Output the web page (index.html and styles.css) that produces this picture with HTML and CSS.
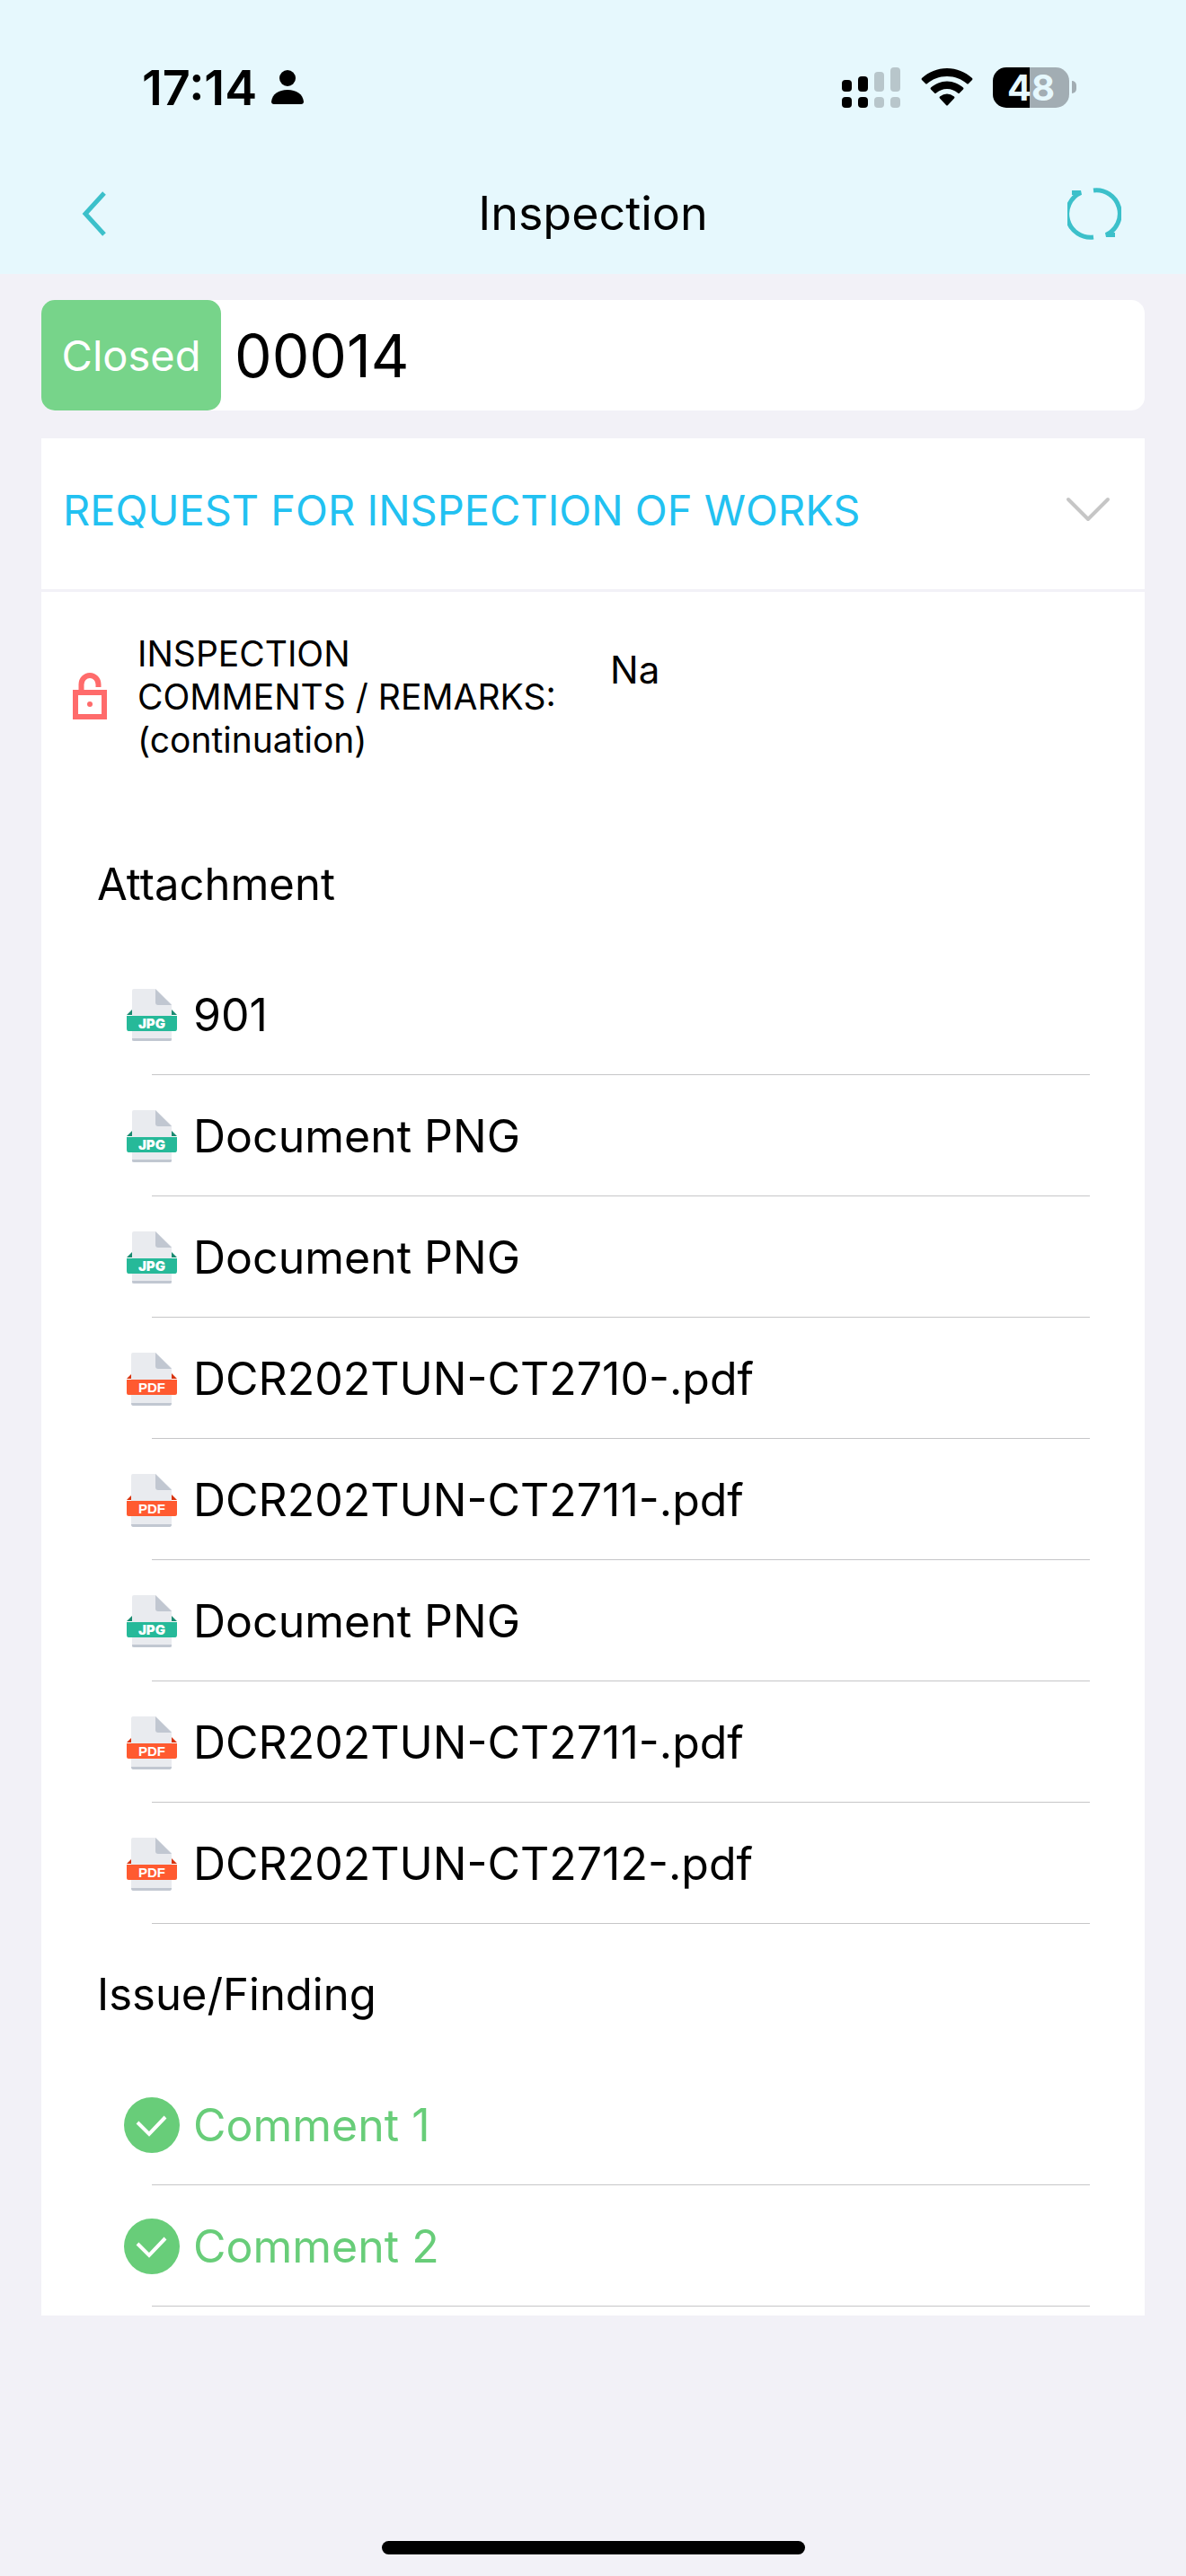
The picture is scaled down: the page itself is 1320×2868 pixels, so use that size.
FILE: index.html
```html
<!DOCTYPE html>
<html lang="en">
<head>
  <meta charset="UTF-8">
  <meta name="viewport" content="width=device-width, initial-scale=1">
  <title>Inspection</title>
  <link rel="stylesheet" href="styles.css">
</head>
<body>

  <!-- shared icons -->
  <svg class="sprite" aria-hidden="true">
    <symbol id="icon-jpg" viewBox="0 0 62 62">
      <path fill="#1a8a70" d="M3 31l6-6h44l6 6z"/>
      <path fill="#e9ebef" d="M11 2h24l18 17v41H9V4q0-2 2-2z"/>
      <path fill="#c1c7d1" d="M35 2l18 18H38q-3 0-3-3z"/>
      <path fill="#c1c7d1" d="M9 57h44v1q0 2-2 2H11q-2 0-2-2z"/>
      <path fill="#26b999" d="M3 32h56v14q0 3-2 3H5q-2 0-2-3z"/>
      <text class="file-type file-type-bold" x="31" y="46" text-anchor="middle">JPG</text>
    </symbol>
    <symbol id="icon-pdf" viewBox="0 0 62 62">
      <path fill="#d8320c" d="M3 31l6-6h44l6 6z"/>
      <path fill="#e9ebef" d="M10 2h25l18 17v41H8V4q0-2 2-2z"/>
      <path fill="#c1c7d1" d="M35 2l18 18H38q-3 0-3-3z"/>
      <path fill="#c1c7d1" d="M8 58h45q0 3-2 3H10q-2 0-2-3z"/>
      <path fill="#ff5a30" d="M3 32h56v15q0 2-2 2H5q-2 0-2-2z"/>
      <text class="file-type" x="31" y="46" text-anchor="middle">PDF</text>
    </symbol>
    <symbol id="icon-check" viewBox="0 0 62 62">
      <circle cx="31" cy="31" r="31" fill="#68cd79"/>
      <path fill="none" stroke="#fff" stroke-width="4" d="M15 28l13 13 18-19"/>
    </symbol>
  </svg>

  <header class="top">
    <div class="status-bar">
      <div class="status-left">
        <span class="time">17:14</span>
        <svg class="person" viewBox="0 0 36 38">
          <ellipse cx="18" cy="9" rx="9" ry="9"/>
          <path d="M3 38q-3 0-3-3C1 27 8 22 18 22s17 5 18 13q0 3-3 3z"/>
        </svg>
      </div>
      <div class="status-right">
        <svg class="signal" viewBox="0 0 66 46">
          <rect x="0" y="15" width="11" height="13" rx="4"/>
          <rect x="18" y="11" width="11" height="17" rx="4"/>
          <rect x="0" y="34" width="11" height="12" rx="4"/>
          <rect x="18" y="34" width="11" height="12" rx="4"/>
          <g fill="#b8c6cb">
            <rect x="36" y="6" width="11" height="22" rx="4"/>
            <rect x="54" y="1" width="11" height="27" rx="4"/>
            <rect x="36" y="34" width="11" height="12" rx="4"/>
            <rect x="54" y="34" width="11" height="12" rx="4"/>
          </g>
        </svg>
        <svg class="wifi" viewBox="0 0 58 42">
          <path d="M29 0c11 0 20 4 28 11q1 1 0 2l-4 4q-1 1-2 0C45 12 38 9 29 9S13 12 7 17q-1 1-2 0l-4-4q-1-1 0-2C9 4 18 0 29 0z"/>
          <path d="M29 14.500c7 0 13 3 18 7q1 1 0 2l-4 4q-1 1-2 0c-4-3-7-4.500-12-4.500s-8 1.500-12 4.500q-1 1-2 0l-4-4q-1-1 0-2c5-4 11-7 18-7z"/>
          <path d="M29 28.500q4 0 8 3 1 1 0 2l-7 7.500q-1 1-2 0l-7-7.500q-1-1 0-2 4-3 8-3z"/>
        </svg>
        <div class="battery"><span class="battery-level">48</span><span class="battery-tip"></span></div>
      </div>
    </div>
    <nav class="nav-bar">
      <button class="nav-button" aria-label="Back">
        <svg class="nav-icon" viewBox="0 0 60 60"><path d="M44 7L23 30l21 23"/></svg>
      </button>
      <h1>Inspection</h1>
      <button class="nav-button" aria-label="Refresh">
        <svg class="nav-icon" viewBox="0 0 60 60">
          <path d="M29 4A26 26 0 0 1 43 53.500H53M29 56A26 26 0 0 1 15 6.500H5"/>
        </svg>
      </button>
    </nav>
  </header>

  <main>
    <div class="record">
      <span class="status">Closed</span>
      <span class="number">00014</span>
    </div>

    <section class="card">
      <button class="card-title" aria-expanded="true">
        <span>REQUEST FOR INSPECTION OF WORKS</span>
        <svg class="chevron" viewBox="0 0 50 28"><path d="M3 3l22 22L47 3"/></svg>
      </button>

      <div class="field">
        <svg class="lock" viewBox="0 0 38 52">
          <path d="M9.500 20V13a9.500 10 0 0 1 19 0v3" stroke-width="6"/>
          <rect x="3" y="22" width="32" height="27" stroke-width="6"/>
          <circle cx="19" cy="35" r="3" stroke="none" fill="#ff6b6b"/>
        </svg>
        <div class="field-label">INSPECTION COMMENTS / REMARKS: (continuation)</div>
        <div class="field-value">Na</div>
      </div>

      <h2>Attachment</h2>
      <ul class="list">
        <li><a href="#"><svg class="row-icon"><use href="#icon-jpg"/></svg>901</a></li>
        <li><a href="#"><svg class="row-icon"><use href="#icon-jpg"/></svg>Document PNG</a></li>
        <li><a href="#"><svg class="row-icon"><use href="#icon-jpg"/></svg>Document PNG</a></li>
        <li><a href="#"><svg class="row-icon"><use href="#icon-pdf"/></svg>DCR202TUN-CT2710-.pdf</a></li>
        <li><a href="#"><svg class="row-icon"><use href="#icon-pdf"/></svg>DCR202TUN-CT2711-.pdf</a></li>
        <li><a href="#"><svg class="row-icon"><use href="#icon-jpg"/></svg>Document PNG</a></li>
        <li><a href="#"><svg class="row-icon"><use href="#icon-pdf"/></svg>DCR202TUN-CT2711-.pdf</a></li>
        <li><a href="#"><svg class="row-icon"><use href="#icon-pdf"/></svg>DCR202TUN-CT2712-.pdf</a></li>
      </ul>

      <h2>Issue/Finding</h2>
      <ul class="list comments">
        <li><a href="#"><svg class="row-icon"><use href="#icon-check"/></svg>Comment 1</a></li>
        <li><a href="#"><svg class="row-icon"><use href="#icon-check"/></svg>Comment 2</a></li>
      </ul>
    </section>
  </main>

  <div class="home-bar"></div>

</body>
</html>
```
FILE: styles.css
```css
* {
  box-sizing: border-box;
}
body {
  margin: 0;
  min-height: 100vh;
  display: flex;
  flex-direction: column;
  background: #f2f1f7;
  color: #000;
  font-family: Inter, "Liberation Sans", sans-serif;
  font-size: 50px;
}
button {
  border: none;
  padding: 0;
  background: none;
  font: inherit;
  cursor: pointer;
}
h1, h2 {
  margin: 0;
  font-weight: 400;
}
.sprite {
  display: none;
}

/* status bar */
.top {
  background: #e6f8fd;
}
.status-bar {
  display: flex;
  justify-content: space-between;
  align-items: center;
  height: 170px;
  padding: 24px 122px 0 158px;
}
.status-left, .status-right {
  display: flex;
  align-items: center;
}
.status-left {
  gap: 16px;
}
.status-right {
  gap: 22px;
}
.time {
  font-size: 54px;
  font-weight: 600;
}
.person {
  width: 36px;
  height: 38px;
}
.signal {
  width: 66px;
  height: 46px;
}
.wifi {
  width: 58px;
  height: 42px;
}
.battery {
  display: flex;
  align-items: center;
  gap: 3px;
}
.battery-level {
  width: 85px;
  height: 45px;
  border-radius: 15px;
  background: linear-gradient(to right, #000 48%, #a2adb3 48%);
  color: #e6f8fd;
  font-size: 40px;
  font-weight: 700;
  line-height: 45px;
  text-align: center;
}
.battery-tip {
  width: 5px;
  height: 14px;
  border-radius: 0 5px 5px 0;
  background: #a2adb3;
}

/* nav bar */
.nav-bar {
  display: flex;
  justify-content: space-between;
  align-items: center;
  height: 135px;
  padding: 0 72px;
}
h1 {
  font-size: 52px;
}
.nav-button {
  height: 60px;
}
.nav-icon {
  display: block;
  width: 60px;
  height: 60px;
  fill: none;
  stroke: #3cc0ca;
  stroke-width: 5;
}

main {
  padding: 29px 46px;
}
.record {
  display: flex;
  align-items: center;
  height: 123px;
  margin-bottom: 31px;
  border-radius: 15px;
  background: #fff;
}
.status {
  width: 200px;
  border-radius: 15px;
  background: #77d48a;
  color: #fff;
  font-size: 47px;
  line-height: 123px;
  text-align: center;
}
.number {
  margin-left: 15px;
  font-size: 66px;
}

.card {
  padding-bottom: 8px;
  background: #fff;
}
.card-title {
  display: flex;
  justify-content: space-between;
  align-items: center;
  width: 100%;
  height: 171px;
  padding: 0 38px 10px 24px;
  border-bottom: 3px solid #f2f1f7;
  color: #22c1f1;
  font-size: 47px;
}
.chevron {
  width: 50px;
  height: 28px;
  fill: none;
  stroke: #c6c6c6;
  stroke-width: 4;
  stroke-linecap: round;
  stroke-linejoin: round;
}

/* form field */
.field {
  display: flex;
  height: 249px;
  padding: 45px 35px 0;
  font-size: 39px;
  line-height: 48px;
}
.lock {
  width: 38px;
  height: 52px;
  margin: 45px 34px 0 0;
  fill: none;
  stroke: #ff6b6b;
}
.field-label {
  width: 470px;
  margin-right: 56px;
}
.field-value {
  padding-top: 18px;
  font-size: 42px;
}

h2 {
  padding-left: 62px;
  font-size: 49px;
  line-height: 154px;
}
.list {
  margin: 0;
  padding: 0 61px 2px 92px;
  list-style: none;
}
.list a {
  display: flex;
  align-items: center;
  gap: 15px;
  height: 134px;
  padding-top: 2px;
  color: #000;
  text-decoration: none;
}
.list li::after {
  content: "";
  display: block;
  height: 1px;
  margin-left: 31px;
  background: #c6c6c8;
}
.list.comments a {
  color: #68cd79;
}
.row-icon {
  width: 62px;
  height: 62px;
}
.file-type {
  fill: #fff;
  font-family: "Liberation Sans", sans-serif;
  font-size: 15px;
  font-weight: 700;
}
.file-type-bold {
  font-family: Inter, sans-serif;
  font-weight: 900;
}

.home-bar {
  width: 471px;
  height: 15px;
  margin: auto auto 24px;
  border-radius: 8px;
  background: #000;
}
```
